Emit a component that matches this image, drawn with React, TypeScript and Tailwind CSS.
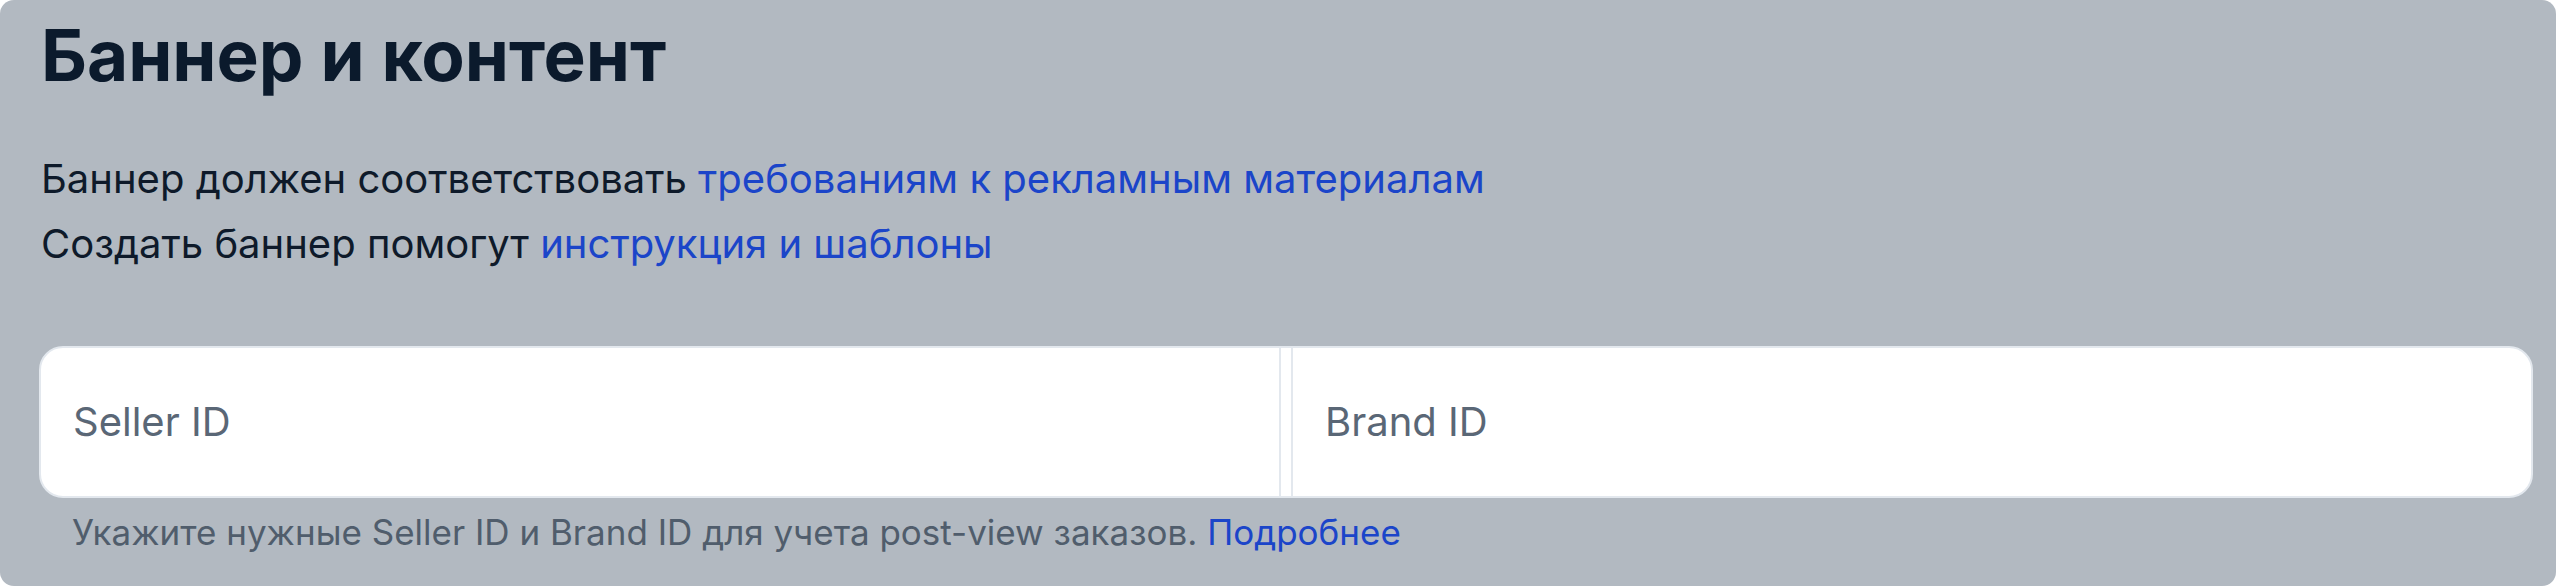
export default function App() {
    return (
        <div className="w-[2560px] h-[586px] bg-white" style={{ fontFamily: 'Inter, "Noto Sans", sans-serif' }}>
            <div className="h-full w-[2556px] rounded-[14px] bg-[#b2b9c1] pl-[41px] pr-[23px] pt-[13px]">
                {/* Title */}
                <h1 className="text-[71px] leading-[84px] font-bold text-[#0b1a2c]">Баннер и контент</h1>

                {/* Requirements */}
                <div className="mt-[49px] text-[40px] leading-[65px] text-[#0e1a2a]">
                    <p>
                        Баннер должен соответствовать{' '}
                        <a className="text-[#1b45c9]">требованиям к рекламным материалам</a>
                    </p>
                    <p>
                        Создать баннер помогут <a className="text-[#1b45c9]">инструкция и шаблоны</a>
                    </p>
                </div>

                {/* IDs */}
                <div className="mt-[70px] ml-[-2px] flex h-[152px] rounded-[24px] border-2 border-[#e3e8ee] bg-white">
                    <div className="flex flex-1 items-center border-r-2 border-[#e3e8ee] px-[32px]">
                        <span className="text-[40px] text-[#5a6776]">Seller ID</span>
                    </div>
                    <div className="w-[10px]" />
                    <div className="flex flex-1 items-center border-l-2 border-[#e3e8ee] px-[32px]">
                        <span className="text-[40px] text-[#5a6776]">Brand ID</span>
                    </div>
                </div>
                <p className="mt-[14px] pl-[31px] text-[35px] leading-[40px] text-[#505d6c]">
                    Укажите нужные Seller ID и Brand ID для учета post-view заказов.{' '}
                    <a className="text-[#1b45c9]">Подробнее</a>
                </p>
            </div>
        </div>
    )
}
